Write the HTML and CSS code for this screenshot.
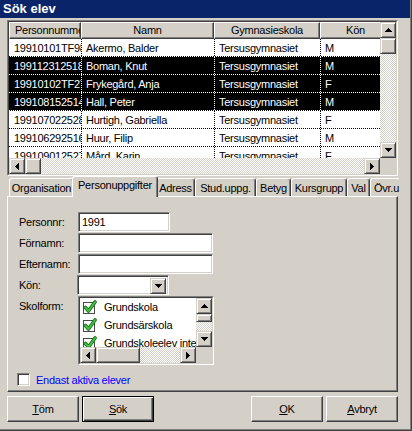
FILE: index.html
```html
<!DOCTYPE html>
<html lang="sv">
<head>
<meta charset="utf-8">
<title>Sök elev</title>
<link rel="stylesheet" href="styles.css">
</head>
<body>
<div class="window">
  <div class="titlebar">Sök elev</div>
  <div class="client">
    <div class="lv">
      <div class="lv-in">
        <div class="lv-view">
          <div class="lv-head">
            <div class="hc c1 left">Personnummer</div>
            <div class="hc c2">Namn</div>
            <div class="hc c3">Gymnasieskola</div>
            <div class="hc c4">Kön</div>
          </div>
          <div class="lv-row"><div class="cell c1">19910101TF98</div><div class="cell c2">Akermo, Balder</div><div class="cell c3">Tersusgymnasiet</div><div class="cell c4">M</div></div>
          <div class="lv-row sel"><div class="cell c1">199112312518</div><div class="cell c2">Boman, Knut</div><div class="cell c3">Tersusgymnasiet</div><div class="cell c4">M</div></div>
          <div class="lv-row sel"><div class="cell c1">19910102TF27</div><div class="cell c2">Frykegård, Anja</div><div class="cell c3">Tersusgymnasiet</div><div class="cell c4">F</div></div>
          <div class="lv-row sel"><div class="cell c1">199108152514</div><div class="cell c2">Hall, Peter</div><div class="cell c3">Tersusgymnasiet</div><div class="cell c4">M</div></div>
          <div class="lv-row"><div class="cell c1">199107022528</div><div class="cell c2">Hurtigh, Gabriella</div><div class="cell c3">Tersusgymnasiet</div><div class="cell c4">F</div></div>
          <div class="lv-row"><div class="cell c1">199106292516</div><div class="cell c2">Huur, Filip</div><div class="cell c3">Tersusgymnasiet</div><div class="cell c4">M</div></div>
          <div class="lv-row"><div class="cell c1">199109012527</div><div class="cell c2">Mård, Karin</div><div class="cell c3">Tersusgymnasiet</div><div class="cell c4">F</div></div>
        </div>
        <div class="vscroll">
          <div class="sbtn"><svg width="7" height="4" viewBox="0 0 7 4"><path d="M3 0h1v1h-1zM2 1h3v1h-3zM1 2h5v1h-5zM0 3h7v1h-7z"/></svg></div>
          <div class="sthumb"></div>
          <div class="strack"></div>
          <div class="sbtn"><svg width="7" height="4" viewBox="0 0 7 4"><path d="M0 0h7v1h-7zM1 1h5v1h-5zM2 2h3v1h-3zM3 3h1v1h-1z"/></svg></div>
        </div>
        <div class="hscroll">
          <div class="sbtn"><svg width="4" height="7" viewBox="0 0 4 7"><path d="M3 0h1v7h-1zM2 1h1v5h-1zM1 2h1v3h-1zM0 3h1v1h-1z"/></svg></div>
          <div class="sthumb"></div>
          <div class="strack"></div>
          <div class="sbtn"><svg width="4" height="7" viewBox="0 0 4 7"><path d="M0 0h1v7h-1zM1 1h1v5h-1zM2 2h1v3h-1zM3 3h1v1h-1z"/></svg></div>
        </div>
        <div class="corner"></div>
      </div>
    </div>

    <div class="tabstrip">
      <div class="tab t1">Organisation</div>
      <div class="tab t2 active">Personuppgifter</div>
      <div class="tab t3">Adress</div>
      <div class="tab t4">Stud.uppg.</div>
      <div class="tab t5">Betyg</div>
      <div class="tab t6">Kursgrupp</div>
      <div class="tab t7">Val</div>
      <div class="tab t8">Övr.uppg.</div>
    </div>
    <div class="pane">
      <div class="form">
        <label class="lbl">Personnr:</label>
        <div class="field f-short">1991</div>
        <label class="lbl">Förnamn:</label>
        <div class="field f-long"></div>
        <label class="lbl">Efternamn:</label>
        <div class="field f-long"></div>
        <label class="lbl">Kön:</label>
        <div class="combo">
          <div class="combo-btn"><svg width="7" height="4" viewBox="0 0 7 4"><path d="M0 0h7v1h-7zM1 1h5v1h-5zM2 2h3v1h-3zM3 3h1v1h-1z"/></svg></div>
        </div>
        <label class="lbl lbl-top">Skolform:</label>
        <div class="clist">
          <div class="clist-in">
            <div class="clist-view">
              <div class="citem"><svg class="chk" width="15" height="15" viewBox="0 0 15 15"><rect x="0.5" y="2.5" width="11" height="11" fill="#fff" stroke="#4a4a4a"/><path d="M2.5 7.5l3 3.5 6.5-9" fill="none" stroke="#1d6b1d" stroke-width="3.6" stroke-linecap="round" stroke-linejoin="round"/><path d="M2.5 7.5l3 3.5 6.5-9" fill="none" stroke="#3fc23f" stroke-width="2" stroke-linecap="round" stroke-linejoin="round"/></svg><span>Grundskola</span></div>
              <div class="citem"><svg class="chk" width="15" height="15" viewBox="0 0 15 15"><rect x="0.5" y="2.5" width="11" height="11" fill="#fff" stroke="#4a4a4a"/><path d="M2.5 7.5l3 3.5 6.5-9" fill="none" stroke="#1d6b1d" stroke-width="3.6" stroke-linecap="round" stroke-linejoin="round"/><path d="M2.5 7.5l3 3.5 6.5-9" fill="none" stroke="#3fc23f" stroke-width="2" stroke-linecap="round" stroke-linejoin="round"/></svg><span>Grundsärskola</span></div>
              <div class="citem"><svg class="chk" width="15" height="15" viewBox="0 0 15 15"><rect x="0.5" y="2.5" width="11" height="11" fill="#fff" stroke="#4a4a4a"/><path d="M2.5 7.5l3 3.5 6.5-9" fill="none" stroke="#1d6b1d" stroke-width="3.6" stroke-linecap="round" stroke-linejoin="round"/><path d="M2.5 7.5l3 3.5 6.5-9" fill="none" stroke="#3fc23f" stroke-width="2" stroke-linecap="round" stroke-linejoin="round"/></svg><span>Grundskoleelev integrerad</span></div>
            </div>
            <div class="vscroll small">
              <div class="sbtn"><svg width="7" height="4" viewBox="0 0 7 4"><path d="M3 0h1v1h-1zM2 1h3v1h-3zM1 2h5v1h-5zM0 3h7v1h-7z"/></svg></div>
              <div class="sthumb short"></div>
              <div class="strack"></div>
              <div class="sbtn"><svg width="7" height="4" viewBox="0 0 7 4"><path d="M0 0h7v1h-7zM1 1h5v1h-5zM2 2h3v1h-3zM3 3h1v1h-1z"/></svg></div>
            </div>
            <div class="hscroll">
              <div class="sbtn"><svg width="4" height="7" viewBox="0 0 4 7"><path d="M3 0h1v7h-1zM2 1h1v5h-1zM1 2h1v3h-1zM0 3h1v1h-1z"/></svg></div>
              <div class="sthumb wide"></div>
              <div class="strack"></div>
              <div class="sbtn"><svg width="4" height="7" viewBox="0 0 4 7"><path d="M0 0h1v7h-1zM1 1h1v5h-1zM2 2h1v3h-1zM3 3h1v1h-1z"/></svg></div>
            </div>
            <div class="corner"></div>
          </div>
        </div>
      </div>
      <div class="check-row">
        <div class="checkbox"></div>
        <span class="check-lbl">Endast aktiva elever</span>
      </div>
    </div>

    <div class="buttons">
      <div class="btn"><u>T</u>öm</div>
      <div class="btn default"><u>S</u>ök</div>
      <div class="spacer"></div>
      <div class="btn"><u>O</u>K</div>
      <div class="btn"><u>A</u>vbryt</div>
    </div>
  </div>
</div>
</body>
</html>
```

FILE: styles.css
```css
* { box-sizing: border-box; }
html, body { margin: 0; padding: 0; background: #d4d0c8; }

.window {
  width: 412px;
  height: 431px;
  background: #d4d0c8;
  border-right: 1px solid #404040;
  border-bottom: 1px solid #404040;
  box-shadow: inset -1px -1px #808080;
  font-family: "Liberation Sans", Arial, sans-serif;
  font-size: 11px;
  letter-spacing: -0.25px;
  color: #000;
  overflow: hidden;
  display: flex;
  flex-direction: column;
}

.titlebar {
  height: 18px;
  margin-right: 1px;
  background: #0a246a;
  color: #fff;
  font-weight: bold;
  font-size: 13px;
  letter-spacing: 0;
  line-height: 18px;
  padding-left: 3px;
}

.client {
  padding: 2px 0 0 7px;
  flex: 1;
  display: flex;
  flex-direction: column;
}

/* ---------- list view ---------- */
.lv {
  width: 391px;
  height: 156px;
  border: 1px solid;
  border-color: #808080 #fff #fff #808080;
}
.lv-in {
  width: 100%;
  height: 100%;
  border: 1px solid;
  border-color: #404040 #d4d0c8 #d4d0c8 #404040;
  display: grid;
  grid-template-columns: 371px 16px;
  grid-template-rows: 136px 16px;
  background: #fff;
}
.lv-view {
  overflow: hidden;
  background: #fff;
}
.lv-head, .lv-row {
  display: flex;
  white-space: nowrap;
}
.hc {
  flex: none;
  height: 17px;
  line-height: 15px;
  background: #d4d0c8;
  border: 1px solid;
  border-color: #fff #404040 #404040 #fff;
  box-shadow: inset -1px -1px #808080;
  text-align: center;
  overflow: hidden;
  padding: 0 2px;
}
.hc.left { text-align: left; padding-left: 5px; }
.c1 { width: 72px; }
.c2 { width: 133px; }
.c3 { width: 106px; }
.c4 { width: 71px; }

.lv-row {
  height: 18px;
  border-bottom: 1px dotted #000;
  color: #000;
}
.lv-row.sel {
  background: #000;
  color: #fff;
  border-bottom-color: #fff;
}
.cell {
  flex: none;
  height: 17px;
  line-height: 18px;
  padding-left: 5px;
  overflow: hidden;
}
.cell.c2, .cell.c3, .cell.c4 {
  border-left: 1px dotted currentColor;
  padding-left: 4px;
}

/* ---------- scrollbars ---------- */
.vscroll {
  display: flex;
  flex-direction: column;
  width: 16px;
}
.hscroll {
  display: flex;
  height: 16px;
}
.sbtn, .sthumb, .combo-btn {
  flex: none;
  width: 16px;
  height: 16px;
  background: #d4d0c8;
  border: 1px solid;
  border-color: #d4d0c8 #404040 #404040 #d4d0c8;
  box-shadow: inset 1px 1px #fff, inset -1px -1px #808080;
  display: flex;
  align-items: center;
  justify-content: center;
}
.sbtn svg, .combo-btn svg { display: block; fill: #000; }
.strack {
  flex: 1;
  background-color: #d4d0c8;
  background-image: conic-gradient(#fff 25%, transparent 0 50%, #fff 0 75%, transparent 0);
  background-size: 2px 2px;
}
.hscroll .sthumb.wide { width: 44px; }
.vscroll .sthumb.short { height: 8px; }
.corner { background: #d4d0c8; }

/* ---------- tabs ---------- */
.tabstrip {
  display: flex;
  align-items: flex-end;
  height: 21px;
  width: 392px;
  padding-left: 2px;
  margin-bottom: -1px;
  overflow: hidden;
  white-space: nowrap;
}
.tab {
  flex: none;
  height: 19px;
  line-height: 18px;
  padding: 0;
  text-align: center;
  border: 1px solid;
  border-bottom: 0;
  border-color: #fff #404040 transparent #fff;
  box-shadow: inset -1px 0 #808080;
  border-radius: 3px 3px 0 0;
  background: #d4d0c8;
}
.tab.active {
  position: relative;
  z-index: 1;
  height: 21px;
  line-height: 17px;
  margin: 0 -2px;
}
.t1 { width: 65px; }
.t2 { width: 86px; }
.t3 { width: 39px; }
.t4 { width: 61px; }
.t5 { width: 35px; }
.t6 { width: 56px; }
.t7 { width: 23px; }
.t8 { width: 50px; text-align: left; padding-left: 3px; }

.pane {
  width: 391px;
  height: 196px;
  border: 1px solid;
  border-color: #fff #404040 #404040 #fff;
  box-shadow: inset -1px -1px #808080;
  padding: 15px 0 0 11px;
}

.form {
  display: grid;
  grid-template-columns: 59px auto;
  row-gap: 1px;
  align-items: center;
  justify-items: start;
}
.lbl { line-height: 14px; }
.lbl-top { align-self: start; padding-top: 3px; }

.field {
  height: 20px;
  background: #fff;
  border: 1px solid;
  border-color: #808080 #fff #fff #808080;
  box-shadow: inset 1px 1px #404040, inset -1px -1px #d4d0c8;
  padding: 2px 0 0 3px;
  line-height: 15px;
}
.f-short { width: 92px; }
.f-long { width: 135px; }

.combo {
  width: 92px;
  height: 20px;
  margin-left: -1px;
  background: #fff;
  border: 1px solid;
  border-color: #808080 #fff #fff #808080;
  box-shadow: inset 1px 1px #404040, inset -1px -1px #d4d0c8;
  display: flex;
  justify-content: flex-end;
  padding: 2px;
}

.clist {
  width: 136px;
  height: 69px;
  border: 1px solid;
  border-color: #808080 #fff #fff #808080;
}
.clist-in {
  width: 100%;
  height: 100%;
  border: 1px solid;
  border-color: #404040 #d4d0c8 #d4d0c8 #404040;
  display: grid;
  grid-template-columns: 116px 16px;
  grid-template-rows: 49px 16px;
  background: #fff;
}
.clist-view { overflow: hidden; background: #fff; }
.citem {
  height: 18px;
  display: flex;
  align-items: center;
  white-space: nowrap;
  padding-left: 3px;
}
.chk { flex: none; margin-right: 6px; }

.check-row {
  display: flex;
  align-items: center;
  margin-top: 8px;
  margin-left: -2px;
  height: 13px;
}
.checkbox {
  width: 13px;
  height: 13px;
  background: #fff;
  border: 1px solid;
  border-color: #808080 #fff #fff #808080;
  box-shadow: inset 1px 1px #404040, inset -1px -1px #d4d0c8;
  margin-right: 6px;
}
.check-lbl { color: #0000ff; }

/* ---------- buttons ---------- */
.buttons {
  display: flex;
  gap: 3px;
  margin-top: 4px;
  width: 391px;
}
.spacer { flex: 1; }
.btn {
  width: 72px;
  height: 26px;
  background: #d4d0c8;
  border: 1px solid;
  border-color: #fff #404040 #404040 #fff;
  box-shadow: inset -1px -1px #808080;
  display: flex;
  align-items: center;
  justify-content: center;
}
.btn.default {
  border: 1px solid #000;
  box-shadow: inset 1px 1px #fff, inset -1px -1px #404040, inset -2px -2px #808080;
}
```
